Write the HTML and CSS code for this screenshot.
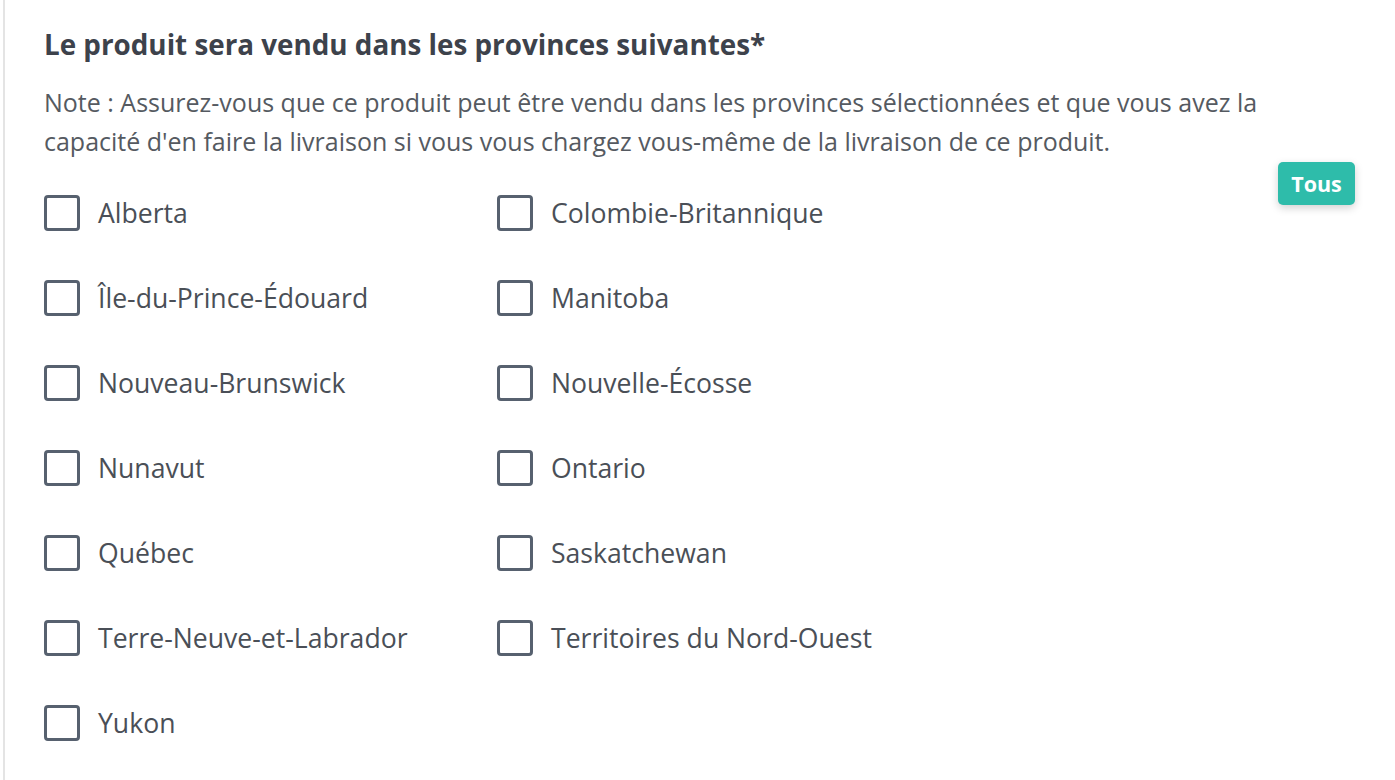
FILE: index.html
```html
<!DOCTYPE html>
<html lang="fr">
<head>
  <meta charset="UTF-8">
  <meta name="viewport" content="width=device-width, initial-scale=1.0">
  <title>Provinces</title>
  <link rel="stylesheet" href="styles.css">
</head>
<body>
  <div class="panel">
    <h2>Le produit sera vendu dans les provinces suivantes*</h2>
    <p class="note">Note : Assurez-vous que ce produit peut être vendu dans les provinces sélectionnées et que vous avez la capacité d'en faire la livraison si vous vous chargez vous-même de la livraison de ce produit.</p>

    <div class="choices">
      <div class="grid">
        <label class="option"><input type="checkbox"><span class="box"></span>Alberta</label>
        <label class="option"><input type="checkbox"><span class="box"></span>Colombie-Britannique</label>
        <label class="option"><input type="checkbox"><span class="box"></span>Île-du-Prince-Édouard</label>
        <label class="option"><input type="checkbox"><span class="box"></span>Manitoba</label>
        <label class="option"><input type="checkbox"><span class="box"></span>Nouveau-Brunswick</label>
        <label class="option"><input type="checkbox"><span class="box"></span>Nouvelle-Écosse</label>
        <label class="option"><input type="checkbox"><span class="box"></span>Nunavut</label>
        <label class="option"><input type="checkbox"><span class="box"></span>Ontario</label>
        <label class="option"><input type="checkbox"><span class="box"></span>Québec</label>
        <label class="option"><input type="checkbox"><span class="box"></span>Saskatchewan</label>
        <label class="option"><input type="checkbox"><span class="box"></span>Terre-Neuve-et-Labrador</label>
        <label class="option"><input type="checkbox"><span class="box"></span>Territoires du Nord-Ouest</label>
        <label class="option"><input type="checkbox"><span class="box"></span>Yukon</label>
      </div>
      <button class="all">Tous</button>
    </div>
  </div>
</body>
</html>
```

FILE: styles.css
```css
* {
  margin: 0;
  padding: 0;
  box-sizing: border-box;
}

body {
  font-family: "Open Sans", Arial, sans-serif;
  background-color: #fff;
  color: #4a4f57;
}

.panel {
  margin-left: 3px;
  border-left: 2px solid #e4e4e4;
  padding: 26px 40px 0 39px;
  min-height: 780px;
}

h2 {
  font-size: 27.8px;
  font-weight: 700;
  color: #3d424b;
  line-height: 36px;
}

.note {
  margin-top: 21px;
  font-size: 25px;
  line-height: 39px;
  color: #555a61;
}

.choices {
  display: flex;
  justify-content: space-between;
  align-items: flex-start;
  margin-top: 9px;
}

.grid {
  display: grid;
  grid-template-columns: 453px 453px;
  grid-auto-rows: 85px;
}

.option {
  display: flex;
  align-items: center;
  gap: 18px;
  font-size: 26.6px;
  color: #4a4f57;
  cursor: pointer;
}

.option input {
  display: none;
}

.box {
  width: 36px;
  height: 36px;
  border: 3px solid #57616f;
  border-radius: 4px;
  background: #fff;
}

.option input:checked + .box {
  background: #2bbba8;
  border-color: #2bbba8;
}

.all {
  margin-top: -8px;
  width: 77px;
  height: 43px;
  border: none;
  border-radius: 5px;
  background-color: #2ebcaa;
  color: #fff;
  font-family: "Open Sans", Arial, sans-serif;
  font-size: 21.5px;
  font-weight: 700;
  box-shadow: 0 3px 8px rgba(0, 0, 0, 0.18);
  cursor: pointer;
}
```
